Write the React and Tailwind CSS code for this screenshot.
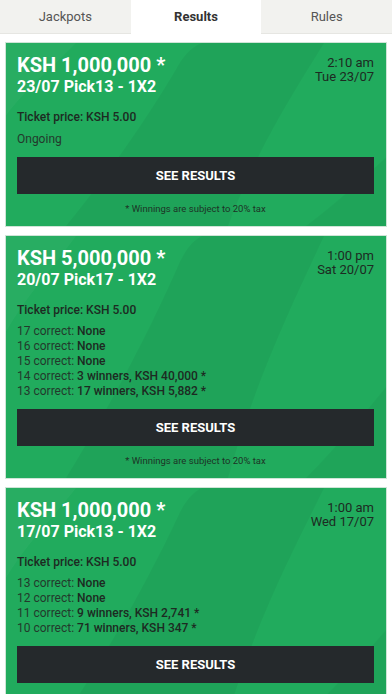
const CARDS = [
  {
    prize: "KSH 1,000,000 *",
    name: "23/07 Pick13 - 1X2",
    time: "2:10 am",
    day: "Tue 23/07",
    ongoing: true,
    rows: [],
  },
  {
    prize: "KSH 5,000,000 *",
    name: "20/07 Pick17 - 1X2",
    time: "1:00 pm",
    day: "Sat 20/07",
    rows: [
      ["17 correct:", "None"],
      ["16 correct:", "None"],
      ["15 correct:", "None"],
      ["14 correct:", "3 winners, KSH 40,000 *"],
      ["13 correct:", "17 winners, KSH 5,882 *"],
    ],
  },
  {
    prize: "KSH 1,000,000 *",
    name: "17/07 Pick13 - 1X2",
    time: "1:00 am",
    day: "Wed 17/07",
    rows: [
      ["13 correct:", "None"],
      ["12 correct:", "None"],
      ["11 correct:", "9 winners, KSH 2,741 *"],
      ["10 correct:", "71 winners, KSH 347 *"],
    ],
  },
];

const TABS = ["Jackpots", "Results", "Rules"];

function Streaks() {
  return (
    <svg
      className="pointer-events-none absolute inset-0 h-full w-full"
      viewBox="0 0 380 240"
      preserveAspectRatio="none"
      aria-hidden="true"
    >
      <path d="M0 0 H70 C40 40 20 60 0 95 Z" fill="rgba(255,255,255,0.035)" />
      <path
        d="M196 0 H318 C290 60 250 140 222 240 H60 C110 160 150 80 172 30 C180 12 188 4 196 0 Z"
        fill="rgba(0,0,0,0.045)"
      />
      <path d="M380 150 V240 H300 C330 210 355 180 380 150 Z" fill="rgba(0,0,0,0.035)" />
    </svg>
  );
}

function Card({ card }) {
  return (
    <div className="relative overflow-hidden border border-[#cfe4d7] bg-[#21ab5d] pb-[11px] pl-[11px] pr-[12px] pt-[10px]">
      <Streaks />
      <div className="relative">
        <div className="flex items-start justify-between">
          <div>
            <div className="text-[20px] font-bold leading-[24px] text-white">
              {card.prize}
            </div>
            <div className="text-[16px] font-bold leading-[20px] text-white">
              {card.name}
            </div>
          </div>
          <div className="mt-[3px] text-right text-[13px] leading-[14px] text-[#1d2a22]">
            <div>{card.time}</div>
            <div>{card.day}</div>
          </div>
        </div>

        <div className="mt-[12px] text-[12px] font-medium leading-[16px] text-[#1d2a22]">
          Ticket price: KSH 5.00
        </div>

        <div className="mt-[6px] text-[12px] leading-[15px] text-[#23392c]">
          {card.ongoing ? (
            <div className="pt-[1px]">Ongoing</div>
          ) : (
            card.rows.map(([label, value]) => (
              <div key={label}>
                {label} <span className="font-medium text-[#1d2a22]">{value}</span>
              </div>
            ))
          )}
        </div>

        <button
          type="button"
          className="mt-[10px] flex h-[37px] w-full items-center justify-center bg-[#25292c] text-[13px] font-bold uppercase text-white"
        >
          See results
        </button>

        <div className="mt-[9px] text-center text-[9.5px] leading-[12px] text-[#1d3326]">
          * Winnings are subject to 20% tax
        </div>
      </div>
    </div>
  );
}

export default function App() {
  return (
    <div
      className="min-h-screen w-full bg-white"
      style={{ fontFamily: "Roboto, 'Liberation Sans', sans-serif" }}
    >
      <div className="grid h-[34px] grid-cols-3">
        {TABS.map((tab) => {
          const active = tab === "Results";
          return (
            <div
              key={tab}
              className={
                active
                  ? "flex items-center justify-center bg-white text-[13px] font-bold text-[#333]"
                  : "flex items-center justify-center border-b border-[#e6e6e2] bg-[#f2f2ef] text-[13px] text-[#555]"
              }
            >
              {tab}
            </div>
          );
        })}
      </div>

      <div className="flex flex-col gap-[8px] px-[5px] pt-[8px]">
        {CARDS.map((card, i) => (
          <Card key={i} card={card} />
        ))}
      </div>
    </div>
  );
}
